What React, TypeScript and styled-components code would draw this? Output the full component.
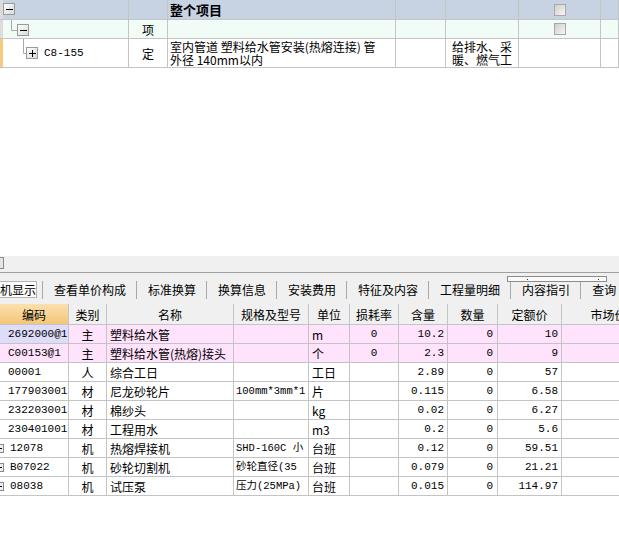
import React from 'react';
import styled, { createGlobalStyle } from 'styled-components';

const GlobalStyle = createGlobalStyle`
  html, body {
    margin: 0;
    padding: 0;
    background: #fff;
  }
  body {
    font-family: "Noto Sans CJK SC", "Liberation Sans", sans-serif;
    font-size: 12px;
    color: #000;
  }
  * {
    box-sizing: border-box;
  }
`;

const LINE = '#c4c4c4';

const Page = styled.div`
  width: 619px;
  height: 535px;
  overflow: hidden;
  display: flex;
  flex-direction: column;
  background: #fff;
`;

/* ---------- upper pane ---------- */

const TopPane = styled.div`
  height: 256px;
  flex: none;
`;

const TopRow = styled.div<{ $bg: string; $h: number }>`
  display: grid;
  grid-template-columns: 3px 126px 39px 228px 50px 73px 82px 18px;
  height: ${(p) => p.$h}px;
  background: ${(p) => p.$bg};
`;

const TopCell = styled.div<{ $align?: string }>`
  border-right: 1px solid ${LINE};
  border-bottom: 1px solid ${LINE};
  display: flex;
  align-items: center;
  justify-content: ${(p) => p.$align || 'flex-start'};
  padding-left: ${(p) => (p.$align === 'center' ? 0 : 2)}px;
  overflow: hidden;
  white-space: nowrap;
  line-height: 13px;
`;

const RowMark = styled.div<{ $bg: string }>`
  background: ${(p) => p.$bg};
  border-bottom: 1px solid ${LINE};
`;

const TreeCell = styled(TopCell)`
  padding-left: 0;
`;

const Title = styled.span`
  font-weight: bold;
  font-size: 13px;
`;

const Mono = styled.span`
  font-family: "Liberation Mono", "Noto Sans CJK SC", monospace;
  font-size: 11px;
`;

const Code = styled(Mono)`
  margin-left: 5px;
`;

const Wrapped = styled.div<{ $indent?: number }>`
  white-space: nowrap;
  line-height: 13px;
  padding-left: ${(p) => p.$indent || 0}px;
`;

const Check = styled.span`
  width: 12px;
  height: 12px;
  border: 1px solid #a8a8a8;
  background: linear-gradient(135deg, #cfcfcf, #f6f6f6);
`;

type TreeProps = { w: number; h: number; box: [number, number]; line?: number; sign: '+' | '-' };

const TreeGlyph = ({ w, h, box, line, sign }: TreeProps) => {
  const [bx, by] = box;
  const cy = by + 6;
  return (
    <svg width={w} height={h} style={{ flex: 'none' }}>
      {line !== undefined && (
        <path d={`M${line + 0.5} 0 V${cy + 0.5} H${bx}`} stroke="#a8a8a8" fill="none" />
      )}
      <defs>
        <linearGradient id="tb" x1="0" y1="0" x2="1" y2="1">
          <stop offset="0" stopColor="#ffffff" />
          <stop offset="1" stopColor="#d8d8d8" />
        </linearGradient>
      </defs>
      <rect x={bx + 0.5} y={by + 0.5} width={11} height={11} fill="url(#tb)" stroke="#9a9a9a" />
      <path d={`M${bx + 3} ${cy + 0.5} H${bx + 10}`} stroke="#000" />
      {sign === '+' && <path d={`M${bx + 6.5} ${by + 3} V${by + 10}`} stroke="#000" />}
    </svg>
  );
};

/* ---------- scroll + tabs ---------- */

const HScroll = styled.div`
  height: 17px;
  flex: none;
  background: #f0f0f0;
  border-bottom: 1px solid #a0a0a0;
  padding-top: 1px;
`;

const ScrollThumb = styled.div`
  width: 4px;
  height: 12px;
  border: 1px solid #8a8a8a;
  border-left: none;
  background: #e4e4e4;
`;

const TabBar = styled.div`
  position: relative;
  height: 31px;
  flex: none;
  display: flex;
  align-items: center;
  background: #f0f0f0;
  white-space: nowrap;
`;

const ActiveTab = styled.div`
  width: 41px;
  height: 17px;
  margin-top: 2px;
  margin-right: 5px;
  background: #fcfcfc;
  border: 1px solid #b4b4b4;
  border-left: none;
  display: flex;
  align-items: center;
  line-height: 15px;
`;

const Sep = styled.span`
  width: 1px;
  height: 18px;
  margin-top: 2px;
  background: #a8a8a8;
  flex: none;
`;

const Tab = styled.span`
  padding: 2px 10px 0 11px;
  line-height: 15px;
`;

const Slider = styled.div`
  position: absolute;
  left: 507px;
  top: 3px;
  width: 100px;
  height: 6px;
  border: 1px solid #8c8c8c;
  background: #fafafa;
  &::before,
  &::after {
    content: '';
    position: absolute;
    top: 2px;
    width: 1px;
    height: 1px;
    background: #333;
  }
  &::before {
    left: 19px;
  }
  &::after {
    right: 7px;
  }
`;

/* ---------- lower grid ---------- */

const COLS = '69px 38px 127px 75px 41px 49px 49px 50px 64px 94px';

const HeadRow = styled.div`
  display: grid;
  grid-template-columns: ${COLS};
  height: 21px;
  flex: none;
  background: #f0f0f0;
`;

const HeadCell = styled.div<{ $active?: boolean }>`
  display: flex;
  align-items: center;
  justify-content: center;
  border-right: 1px solid ${LINE};
  border-bottom: 1px solid ${LINE};
  background: ${(p) => (p.$active ? 'linear-gradient(#fbe0ae, #f4c679)' : 'transparent')};
  white-space: nowrap;
  overflow: hidden;
`;

const DataRow = styled.div<{ $bg: string }>`
  display: grid;
  grid-template-columns: ${COLS};
  height: 19px;
  flex: none;
  background: ${(p) => p.$bg};
`;

const Cell = styled.div<{ $align?: 'left' | 'center' | 'right'; $pad?: number; $bg?: string }>`
  display: flex;
  align-items: center;
  justify-content: ${(p) =>
    p.$align === 'center' ? 'center' : p.$align === 'right' ? 'flex-end' : 'flex-start'};
  padding: 0 ${(p) => (p.$align === 'right' ? p.$pad ?? 3 : 0)}px 0
    ${(p) => (p.$align === 'left' || !p.$align ? p.$pad ?? 3 : 0)}px;
  border-right: 1px solid ${LINE};
  border-bottom: 1px solid ${LINE};
  background: ${(p) => p.$bg || 'transparent'};
  white-space: nowrap;
  overflow: hidden;
  line-height: 15px;
`;

const SpecText = styled.span`
  font-family: "Liberation Mono", "Noto Sans CJK SC", monospace;
  font-size: 10.5px;
`;

const ExpandStub = styled.span`
  position: relative;
  width: 4px;
  height: 9px;
  margin-right: 6px;
  border: 1px solid #8a8a8a;
  border-left: none;
  background: #eee;
  flex: none;
  &::after {
    content: '';
    position: absolute;
    left: 0;
    top: 3px;
    width: 2px;
    height: 1px;
    background: #000;
  }
`;

type Item = {
  code: string;
  kind: string;
  name: string;
  spec?: string;
  unit: string;
  loss?: string;
  qty: string;
  num: string;
  price: string;
  pink?: boolean;
  selected?: boolean;
  expand?: boolean;
};

const items: Item[] = [
  { code: '2692000@1', kind: '主', name: '塑料给水管', unit: 'm', loss: '0', qty: '10.2', num: '0', price: '10', pink: true, selected: true },
  { code: 'C00153@1', kind: '主', name: '塑料给水管(热熔)接头', unit: '个', loss: '0', qty: '2.3', num: '0', price: '9', pink: true },
  { code: '00001', kind: '人', name: '综合工日', unit: '工日', qty: '2.89', num: '0', price: '57' },
  { code: '177903001', kind: '材', name: '尼龙砂轮片', spec: '100mm*3mm*1', unit: '片', qty: '0.115', num: '0', price: '6.58' },
  { code: '232203001', kind: '材', name: '棉纱头', unit: 'kg', qty: '0.02', num: '0', price: '6.27' },
  { code: '230401001', kind: '材', name: '工程用水', unit: 'm3', qty: '0.2', num: '0', price: '5.6' },
  { code: '12078', kind: '机', name: '热熔焊接机', spec: 'SHD-160C 小', unit: '台班', qty: '0.12', num: '0', price: '59.51', expand: true },
  { code: 'B07022', kind: '机', name: '砂轮切割机', spec: '砂轮直径(35', unit: '台班', qty: '0.079', num: '0', price: '21.21', expand: true },
  { code: '08038', kind: '机', name: '试压泵', spec: '压力(25MPa)', unit: '台班', qty: '0.015', num: '0', price: '114.97', expand: true },
];

const heads = ['编码', '类别', '名称', '规格及型号', '单位', '损耗率', '含量', '数量', '定额价', '市场价'];
const tabs = ['查看单价构成', '标准换算', '换算信息', '安装费用', '特征及内容', '工程量明细', '内容指引', '查询'];

const App = () => {
  return (
    <Page>
      <GlobalStyle />
      <TopPane>
        <TopRow $bg="#c7d3e3" $h={20}>
          <RowMark $bg="#dcdcdc" />
          <TreeCell>
            <TreeGlyph w={20} h={19} box={[0, 3]} sign="-" />
          </TreeCell>
          <TopCell />
          <TopCell>
            <Title>整个项目</Title>
          </TopCell>
          <TopCell />
          <TopCell />
          <TopCell $align="center">
            <Check />
          </TopCell>
          <TopCell />
        </TopRow>
        <TopRow $bg="#f1fcf6" $h={19}>
          <RowMark $bg="#dcdcdc" />
          <TreeCell>
            <TreeGlyph w={30} h={18} box={[14, 4]} line={8} sign="-" />
          </TreeCell>
          <TopCell $align="center">项</TopCell>
          <TopCell />
          <TopCell />
          <TopCell />
          <TopCell $align="center">
            <Check />
          </TopCell>
          <TopCell />
        </TopRow>
        <TopRow $bg="#ffffff" $h={29}>
          <RowMark $bg="#f8c97c" />
          <TreeCell>
            <TreeGlyph w={36} h={28} box={[23, 8]} line={20} sign="+" />
            <Code>C8-155</Code>
          </TreeCell>
          <TopCell $align="center">定</TopCell>
          <TopCell>
            <Wrapped>
              室内管道 塑料给水管安装(热熔连接) 管
              <br />
              外径 140mm以内
            </Wrapped>
          </TopCell>
          <TopCell />
          <TopCell>
            <Wrapped $indent={4}>
              给排水、采
              <br />
              暖、燃气工
            </Wrapped>
          </TopCell>
          <TopCell />
          <TopCell />
        </TopRow>
      </TopPane>

      <HScroll>
        <ScrollThumb />
      </HScroll>

      <TabBar>
        <ActiveTab>机显示</ActiveTab>
        {tabs.map((t) => (
          <React.Fragment key={t}>
            <Sep />
            <Tab>{t}</Tab>
          </React.Fragment>
        ))}
        <Slider />
      </TabBar>

      <HeadRow>
        {heads.map((h, i) => (
          <HeadCell key={h} $active={i === 0}>
            {h}
          </HeadCell>
        ))}
      </HeadRow>

      {items.map((it) => (
        <DataRow key={it.code} $bg={it.pink ? '#ffe2fb' : '#ffffff'}>
          <Cell $pad={it.expand ? 0 : 8} $bg={it.selected ? '#dedcf9' : undefined}>
            {it.expand && <ExpandStub />}
            <Mono>{it.code}</Mono>
          </Cell>
          <Cell $align="center">{it.kind}</Cell>
          <Cell $pad={3}>{it.name}</Cell>
          <Cell $pad={2}>
            <SpecText>{it.spec}</SpecText>
          </Cell>
          <Cell $pad={3}>{it.unit}</Cell>
          <Cell $align="center">
            <Mono>{it.loss}</Mono>
          </Cell>
          <Cell $align="right" $pad={3}>
            <Mono>{it.qty}</Mono>
          </Cell>
          <Cell $align="right" $pad={4}>
            <Mono>{it.num}</Mono>
          </Cell>
          <Cell $align="right" $pad={3}>
            <Mono>{it.price}</Mono>
          </Cell>
          <Cell />
        </DataRow>
      ))}
    </Page>
  );
};

export default App;
